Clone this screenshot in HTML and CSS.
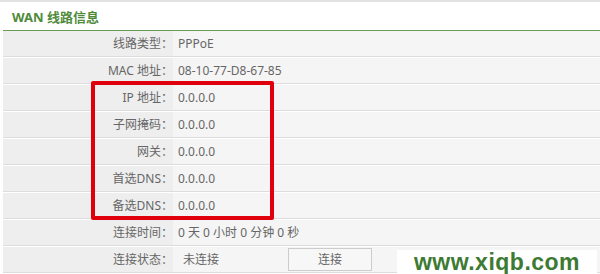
FILE: index.html
```html
<!DOCTYPE html>
<html lang="zh-CN">
<head>
<meta charset="utf-8">
<title>WAN 线路信息</title>
<link rel="stylesheet" href="styles.css">
</head>
<body>
<div class="panel">
  <div class="title">WAN 线路信息</div>
  <div class="rows">
    <div class="row"><div class="label">线路类型：</div><div class="value">PPPoE</div></div>
    <div class="row"><div class="label">MAC 地址：</div><div class="value">08-10-77-D8-67-85</div></div>
    <div class="row"><div class="label">IP 地址：</div><div class="value">0.0.0.0</div></div>
    <div class="row"><div class="label">子网掩码：</div><div class="value">0.0.0.0</div></div>
    <div class="row"><div class="label">网关：</div><div class="value">0.0.0.0</div></div>
    <div class="row"><div class="label">首选DNS：</div><div class="value">0.0.0.0</div></div>
    <div class="row"><div class="label">备选DNS：</div><div class="value">0.0.0.0</div></div>
    <div class="row"><div class="label">连接时间：</div><div class="value">0 天 0 小时 0 分钟 0 秒</div></div>
    <div class="row"><div class="label">连接状态：</div><div class="value status"><span class="state">未连接</span><button class="btn" type="button">连接</button></div></div>
  </div>
  <div class="highlight"></div>
  <div class="watermark">www.xiqb.com</div>
</div>
</body>
</html>
```
FILE: styles.css
```css
html, body {
  margin: 0;
  padding: 0;
  background: #ffffff;
}
body {
  width: 600px;
  height: 274px;
  overflow: hidden;
  font-family: "Noto Sans", "Noto Sans CJK SC", sans-serif;
  font-size: 12px;
  color: #666666;
}
.panel {
  position: relative;
  border-top: 2px solid #e2e2e2;
  padding-left: 3px;
}
.title {
  height: 28px;
  display: flex;
  align-items: center;
  padding-left: 9px;
  font-size: 13px;
  font-weight: bold;
  color: #4f8b3b;
  border-bottom: 1px solid #6b9a55;
}
.row {
  display: grid;
  grid-template-columns: 170px 1fr;
  height: 25px;
  border-bottom: 1px solid #dddddd;
  margin-bottom: 1px;
}
.label {
  background: #eeeeee;
  text-align: right;
  line-height: 25px;
  white-space: nowrap;
}
.value {
  background: #f5f5f5;
  line-height: 25px;
  padding-left: 5px;
  white-space: nowrap;
}
.status {
  display: flex;
  align-items: center;
  padding-left: 10px;
}
.state {
  width: 105px;
}
.btn {
  width: 84px;
  height: 23px;
  margin: 0;
  padding: 0;
  border: 1px solid #cccccc;
  background: #f7f7f7;
  color: #666666;
  font-family: "Noto Sans", "Noto Sans CJK SC", sans-serif;
  font-size: 12px;
  line-height: 21px;
}
.highlight {
  position: absolute;
  left: 91px;
  top: 79px;
  width: 175px;
  height: 131px;
  border: 4px solid #e0000b;
  border-radius: 2px;
}
.watermark {
  position: absolute;
  left: 397px;
  top: 248px;
  width: 200px;
  height: 24px;
  background: #ffffff;
  color: #3d7a32;
  font-family: "Liberation Sans", Arial, sans-serif;
  font-weight: bold;
  font-size: 23px;
  letter-spacing: 0.5px;
  line-height: 24px;
  text-align: center;
}
```
